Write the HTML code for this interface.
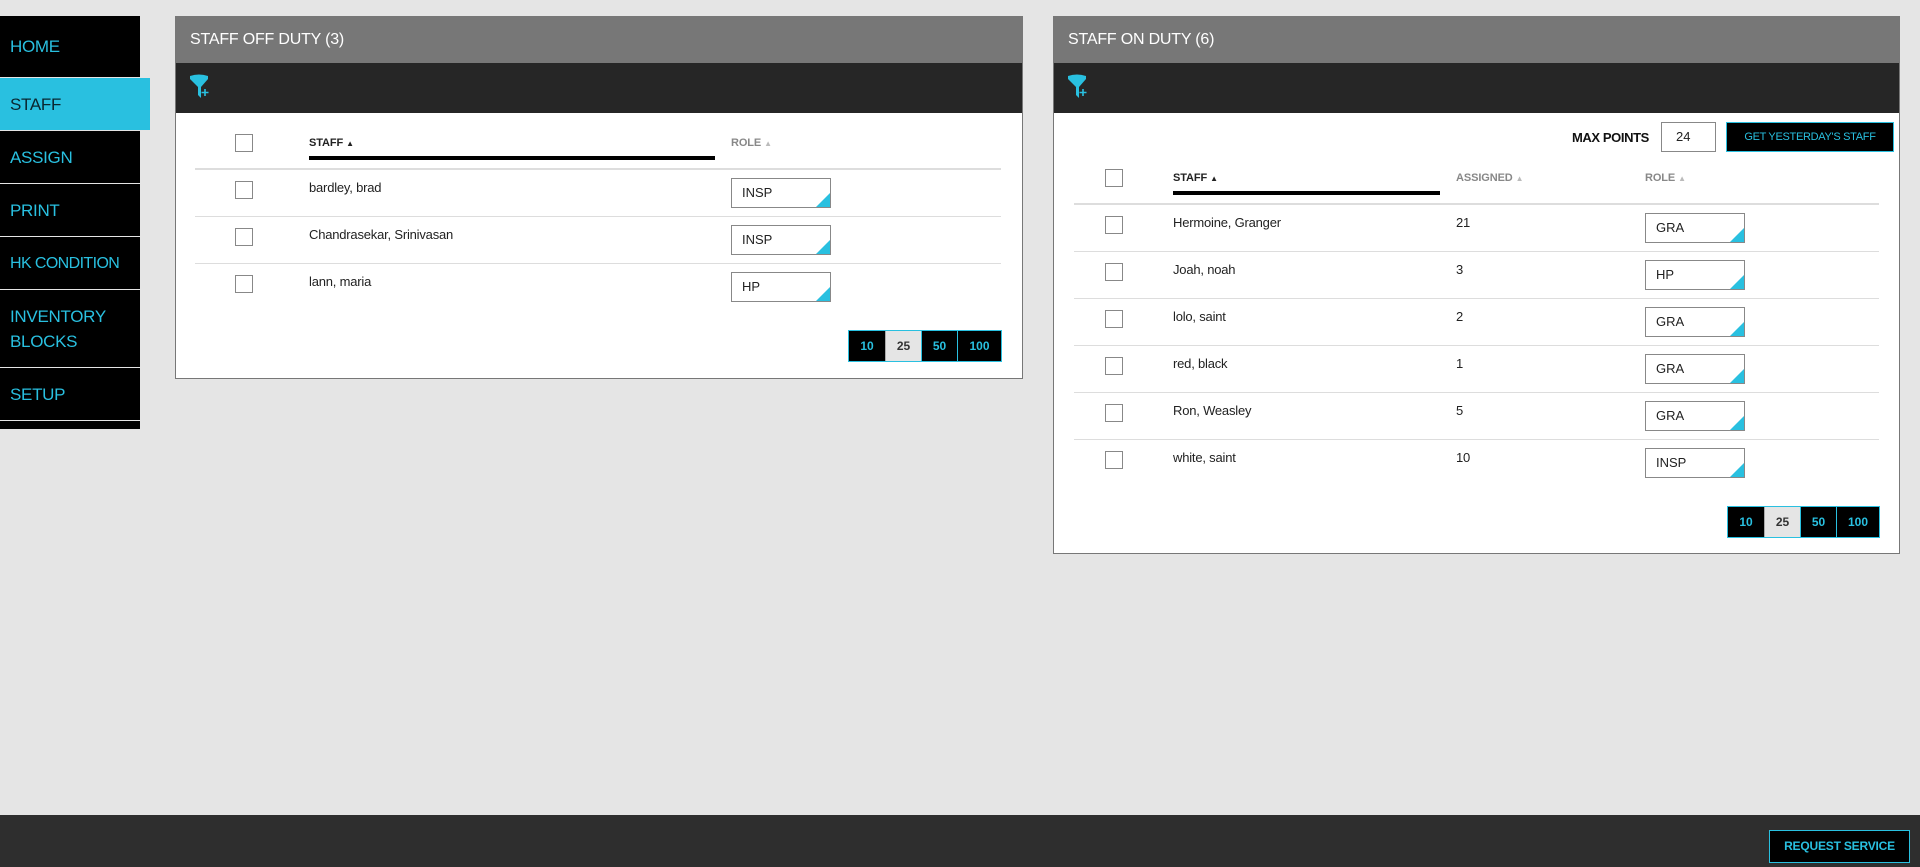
<!DOCTYPE html>
<html><head><meta charset="utf-8"><style>
*{margin:0;padding:0;box-sizing:border-box}
body{width:1920px;height:867px;background:#e5e5e5;position:relative;overflow:hidden;font-family:"Liberation Sans Narrow","Liberation Sans",sans-serif;color:#222}
.a{position:absolute;white-space:nowrap}
.nav{left:0;width:140px;background:#000;color:#29c0e0;font-size:17px;letter-spacing:-0.3px;padding-left:10px;display:flex;align-items:center;line-height:25px}
.nav.act{background:#29c0e0;color:#0a2630;width:150px}
.panel{background:#fff;border:1px solid #777}
.ph{background:#777;color:#fff;font-size:16px;letter-spacing:-0.2px;height:46px;line-height:46px;padding-left:14px}
.tb{background:#262626;height:50px;position:relative}
.cb{width:18px;height:18px;border:1px solid #888;background:#fff}
.th{font-size:11px;font-weight:bold;letter-spacing:-0.1px}
.txt{font-size:13px;letter-spacing:-0.2px}
.sel{width:100px;height:30px;border:1px solid #888;background:#fff;font-size:13px;padding-left:10px;line-height:28px;overflow:hidden}
.sel:after{content:"";position:absolute;right:0;bottom:0;border-style:solid;border-width:0 0 14px 14px;border-color:transparent transparent #29c0e0 transparent}
.line{height:1px;background:#ddd}
.pg{display:flex;border:1px solid #29c0e0;height:32px}
.pg div{background:#000;color:#29c0e0;font-weight:bold;font-size:12px;text-align:center;line-height:30px;border-left:1px solid #29c0e0}
.pg div:first-child{border-left:none}
.pg .on{background:#e5e5e5;color:#333;border-left:1px solid #aaa}
</style></head><body>

<div class="a nav" style="top:16px;height:61px">HOME</div>
<div class="a nav act" style="top:78px;height:52px">STAFF</div>
<div class="a nav" style="top:131px;height:52px">ASSIGN</div>
<div class="a nav" style="top:184px;height:52px">PRINT</div>
<div class="a nav" style="top:237px;height:52px;font-size:16px;letter-spacing:-0.6px">HK CONDITION</div>
<div class="a nav" style="top:290px;height:77px">INVENTORY<br>BLOCKS</div>
<div class="a nav" style="top:368px;height:52px">SETUP</div>
<div class="a nav" style="top:421px;height:8px"></div>

<!-- Panel 1 -->
<div class="a panel" style="left:175px;top:16px;width:848px;height:363px">
 <div class="ph">STAFF OFF DUTY (3)</div>
 <div class="tb"><svg class="a" style="left:13px;top:11px" width="24" height="26" viewBox="0 0 24 26"><path d="M1 2 Q10 -1 19 2 L19 5 L12 13 L12 24 L9 21 L9 13 L1 5 Z" fill="#29c0e0"/><path d="M16 15v7M12.5 18.5h7" stroke="#29c0e0" stroke-width="1.6"/></svg></div>
</div>
<div class="a cb" style="left:235px;top:134px"></div>
<div class="a th" style="left:309px;top:137px">STAFF <span style="font-size:8px">▲</span></div>
<div class="a" style="left:309px;top:156px;width:406px;height:4px;background:#000"></div>
<div class="a th" style="left:731px;top:137px;color:#888">ROLE <span style="font-size:8px;color:#bbb">▲</span></div>
<div class="a" style="left:195px;top:168px;width:806px;height:2px;background:#ddd"></div>
<div class="a cb" style="left:235px;top:181px"></div><div class="a txt" style="left:309px;top:180px">bardley, brad</div><div class="a sel" style="left:731px;top:178px">INSP</div>
<div class="a line" style="left:195px;top:216px;width:806px"></div>
<div class="a cb" style="left:235px;top:228px"></div><div class="a txt" style="left:309px;top:227px">Chandrasekar, Srinivasan</div><div class="a sel" style="left:731px;top:225px">INSP</div>
<div class="a line" style="left:195px;top:263px;width:806px"></div>
<div class="a cb" style="left:235px;top:275px"></div><div class="a txt" style="left:309px;top:274px">lann, maria</div><div class="a sel" style="left:731px;top:272px">HP</div>
<div class="a pg" style="left:848px;top:330px;width:154px"><div style="width:36px">10</div><div class="on" style="width:36px">25</div><div style="width:36px">50</div><div style="width:44px">100</div></div>

<!-- Panel 2 -->
<div class="a panel" style="left:1053px;top:16px;width:847px;height:538px">
 <div class="ph">STAFF ON DUTY (6)</div>
 <div class="tb"><svg class="a" style="left:13px;top:11px" width="24" height="26" viewBox="0 0 24 26"><path d="M1 2 Q10 -1 19 2 L19 5 L12 13 L12 24 L9 21 L9 13 L1 5 Z" fill="#29c0e0"/><path d="M16 15v7M12.5 18.5h7" stroke="#29c0e0" stroke-width="1.6"/></svg></div>
</div>
<div class="a" style="left:1572px;top:130px;font-size:13px;font-weight:bold;letter-spacing:-0.4px;color:#111">MAX POINTS</div>
<div class="a" style="left:1661px;top:122px;width:55px;height:30px;border:1px solid #888;background:#fff;font-size:13px;line-height:28px;padding-left:14px">24</div>
<div class="a" style="left:1726px;top:122px;width:168px;height:30px;border:1px solid #29c0e0;background:#000;color:#29c0e0;font-size:11px;letter-spacing:-0.3px;line-height:28px;text-align:center">GET YESTERDAY'S STAFF</div>
<div class="a cb" style="left:1105px;top:169px"></div>
<div class="a th" style="left:1173px;top:172px">STAFF <span style="font-size:8px">▲</span></div>
<div class="a" style="left:1173px;top:191px;width:267px;height:4px;background:#000"></div>
<div class="a th" style="left:1456px;top:172px;color:#888">ASSIGNED <span style="font-size:8px;color:#bbb">▲</span></div>
<div class="a th" style="left:1645px;top:172px;color:#888">ROLE <span style="font-size:8px;color:#bbb">▲</span></div>
<div class="a" style="left:1074px;top:203px;width:805px;height:2px;background:#ddd"></div>

<div class="a cb" style="left:1105px;top:216px"></div><div class="a txt" style="left:1173px;top:215px">Hermoine, Granger</div><div class="a txt" style="left:1456px;top:215px">21</div><div class="a sel" style="left:1645px;top:213px">GRA</div>
<div class="a line" style="left:1074px;top:251px;width:805px"></div>
<div class="a cb" style="left:1105px;top:263px"></div><div class="a txt" style="left:1173px;top:262px">Joah, noah</div><div class="a txt" style="left:1456px;top:262px">3</div><div class="a sel" style="left:1645px;top:260px">HP</div>
<div class="a line" style="left:1074px;top:298px;width:805px"></div>
<div class="a cb" style="left:1105px;top:310px"></div><div class="a txt" style="left:1173px;top:309px">lolo, saint</div><div class="a txt" style="left:1456px;top:309px">2</div><div class="a sel" style="left:1645px;top:307px">GRA</div>
<div class="a line" style="left:1074px;top:345px;width:805px"></div>
<div class="a cb" style="left:1105px;top:357px"></div><div class="a txt" style="left:1173px;top:356px">red, black</div><div class="a txt" style="left:1456px;top:356px">1</div><div class="a sel" style="left:1645px;top:354px">GRA</div>
<div class="a line" style="left:1074px;top:392px;width:805px"></div>
<div class="a cb" style="left:1105px;top:404px"></div><div class="a txt" style="left:1173px;top:403px">Ron, Weasley</div><div class="a txt" style="left:1456px;top:403px">5</div><div class="a sel" style="left:1645px;top:401px">GRA</div>
<div class="a line" style="left:1074px;top:439px;width:805px"></div>
<div class="a cb" style="left:1105px;top:451px"></div><div class="a txt" style="left:1173px;top:450px">white, saint</div><div class="a txt" style="left:1456px;top:450px">10</div><div class="a sel" style="left:1645px;top:448px">INSP</div>
<div class="a pg" style="left:1727px;top:506px;width:153px"><div style="width:36px">10</div><div class="on" style="width:36px">25</div><div style="width:36px">50</div><div style="width:43px">100</div></div>

<!-- Footer -->
<div class="a" style="left:0;top:815px;width:1920px;height:52px;background:#2e2e2e"></div>
<div class="a" style="left:1769px;top:830px;width:141px;height:33px;border:1px solid #29c0e0;background:#000;color:#29c0e0;font-weight:bold;font-size:12px;letter-spacing:-0.2px;line-height:31px;text-align:center">REQUEST SERVICE</div>
</body></html>
